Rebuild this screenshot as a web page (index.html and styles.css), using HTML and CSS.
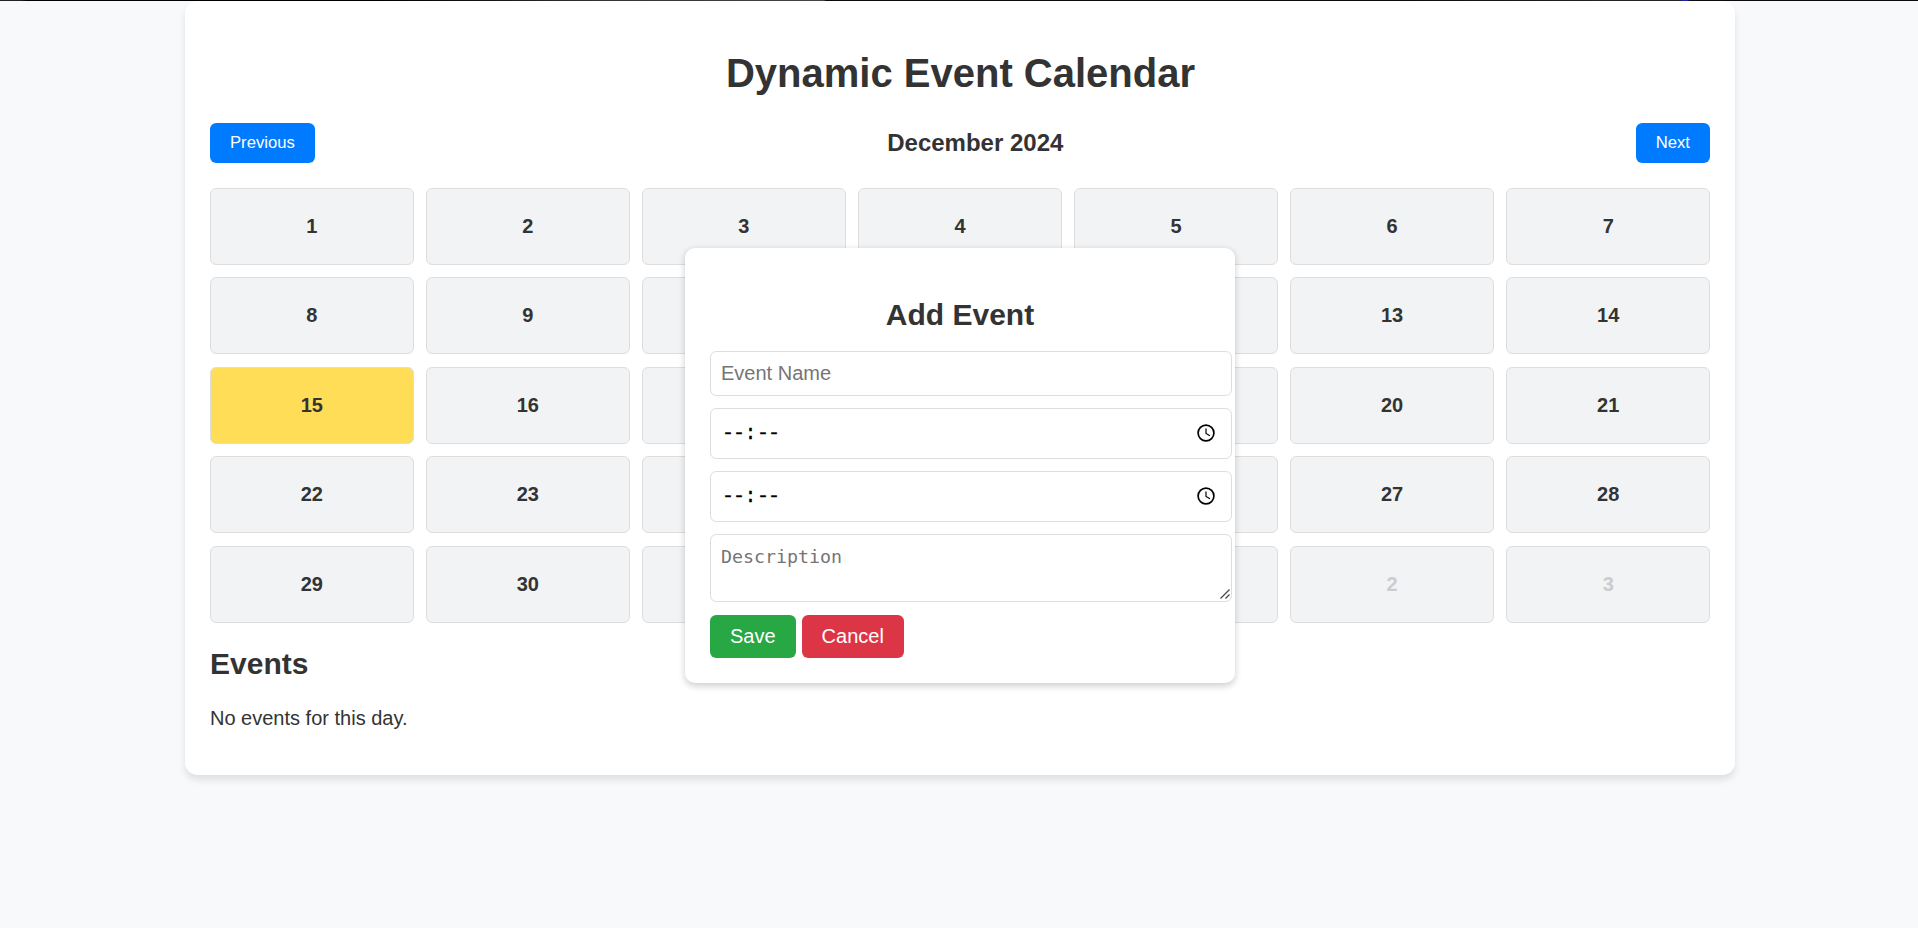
FILE: index.html
```
<!DOCTYPE html>
<html lang="en">
<head>
<meta charset="utf-8">
<title>Dynamic Event Calendar</title>
<link rel="stylesheet" href="styles.css">
</head>
<body>
<div class="edge"></div>
<main class="container">
  <h1 class="title">Dynamic Event Calendar</h1>
  <div class="nav">
    <button class="nav-btn">Previous</button>
    <span class="month">December 2024</span>
    <button class="nav-btn">Next</button>
  </div>
  <div class="grid">
    <div class="day">1</div><div class="day">2</div><div class="day">3</div><div class="day">4</div><div class="day">5</div><div class="day">6</div><div class="day">7</div>
    <div class="day">8</div><div class="day">9</div><div class="day"></div><div class="day"></div><div class="day"></div><div class="day">13</div><div class="day">14</div>
    <div class="day selected">15</div><div class="day">16</div><div class="day"></div><div class="day"></div><div class="day"></div><div class="day">20</div><div class="day">21</div>
    <div class="day">22</div><div class="day">23</div><div class="day"></div><div class="day"></div><div class="day"></div><div class="day">27</div><div class="day">28</div>
    <div class="day">29</div><div class="day">30</div><div class="day"></div><div class="day"></div><div class="day"></div><div class="day other">2</div><div class="day other">3</div>
  </div>
  <h2 class="events-title">Events</h2>
  <p class="events-text">No events for this day.</p>
</main>
<div class="modal">
  <h2 class="modal-title">Add Event</h2>
  <div class="field name">Event Name</div>
  <div class="field time"><span class="clock-text"><i>-</i><i>-</i><i class="colon">:</i><i>-</i><i>-</i></span>
    <svg class="clock" viewBox="0 0 20 20"><circle cx="10" cy="10" r="7.9"/><path class="hand" d="M10 5.5V10.5L14 12.8"/></svg></div>
  <div class="field time"><span class="clock-text"><i>-</i><i>-</i><i class="colon">:</i><i>-</i><i>-</i></span>
    <svg class="clock" viewBox="0 0 20 20"><circle cx="10" cy="10" r="7.9"/><path class="hand" d="M10 5.5V10.5L14 12.8"/></svg></div>
  <div class="field desc">Description
    <svg class="grip" viewBox="0 0 10 10"><path d="M.5 9.5L9.5.5M5.5 9.5L9.5 5.5"/></svg></div>
  <div class="actions"><button class="btn save">Save</button><button class="btn cancel">Cancel</button></div>
</div>
</body>
</html>
```

FILE: styles.css
```
* { box-sizing: border-box; }
body {
  margin: 0;
  height: 928px;
  overflow: hidden;
  background: #f8f9fb;
  color: #333;
  font: 20px/23px "Liberation Sans", Arial, sans-serif;
}
.edge {
  position: absolute;
  top: 0;
  left: 0;
  width: 100%;
  height: 1px;
  background: linear-gradient(90deg, #222 0 20px, #000 28px 380px, #151115 480px, #333 600px, #444 824px, #0d0a0d 826px 1400px, #222 1600px 1680px, #22a 1683px 1687px, #0d0a0d 1690px);
}
.container {
  width: 1550px;
  height: 774px;
  margin: 1px auto 0 185px;
  padding: 47px 25px 25px;
  background: #fff;
  border-radius: 12.5px;
  box-shadow: 0 5px 7.5px rgba(0, 0, 0, .1);
}
.title {
  margin: 0 0 25px;
  padding-left: 1px;
  font-size: 40px;
  line-height: 50px;
  text-align: center;
}
.nav {
  display: flex;
  justify-content: space-between;
  align-items: center;
  height: 40px;
  margin-bottom: 25px;
}
.nav-btn {
  height: 40px;
  padding: 0 20px;
  border: 0;
  border-radius: 6.25px;
  background: #007bff;
  color: #fff;
  font: 16.67px "Liberation Sans", Arial, sans-serif;
}
.month { padding-bottom: 2px; font-size: 24px; font-weight: bold; }
.grid {
  display: grid;
  grid-template-columns: repeat(7, 1fr);
  grid-auto-rows: 77px;
  gap: 12.4px 12.5px;
}
.day {
  display: flex;
  align-items: center;
  justify-content: center;
  background: #f1f3f5;
  border: 1px solid #ddd;
  border-radius: 6.25px;
  font-weight: bold;
}
.selected { background: #ffdd57; }
.other { color: #ccc; }
.events-title { margin: 24.4px 0 0; font-size: 30px; line-height: 34px; }
.events-text { margin: 25.6px 0 0; }
.modal {
  position: absolute;
  left: 685px;
  top: 248px;
  width: 550px;
  height: 435px;
  padding: 50px 25px 25px;
  background: #fff;
  border-radius: 10px;
  box-shadow: 0 2.5px 7.5px rgba(0, 0, 0, .2);
}
.modal-title { margin: 0 0 19px; font-size: 30px; line-height: 34px; text-align: center; }
.field {
  display: flex;
  align-items: center;
  width: 522px;
  margin-bottom: 12.5px;
  padding: 0 10px;
  background: #fff;
  border: 1px solid #ddd;
  border-radius: 6.25px;
}
.name { height: 44.5px; color: #757575; }
.time { height: 50.5px; justify-content: space-between; padding: 0 15px 0 11px; color: #000; }
.clock-text { display: flex; font-family: "Liberation Mono", monospace; font-size: 20px; -webkit-text-stroke: .3px #000; }
.clock-text i { width: 11px; font-style: normal; text-align: center; }
.clock-text .colon { width: 13px; }
.clock { width: 20px; height: 20px; fill: none; stroke: #000; stroke-width: 1.7; }
.clock .hand { stroke-width: 1.2; }
.desc {
  position: relative;
  align-items: flex-start;
  height: 68px;
  padding-top: 10px;
  color: #757575;
  font-family: "DejaVu Sans Mono", monospace;
  font-size: 18.3px;
}
.grip { position: absolute; right: 1px; bottom: 2px; width: 10px; height: 10px; fill: none; stroke: #444; stroke-width: 1.2; }
.actions { display: flex; gap: 6px; }
.btn {
  height: 43px;
  padding: 0 20px;
  border: 0;
  border-radius: 6.25px;
  color: #fff;
  font: 20px "Liberation Sans", Arial, sans-serif;
}
.save { background: #28a745; }
.cancel { background: #dc3545; }
```
